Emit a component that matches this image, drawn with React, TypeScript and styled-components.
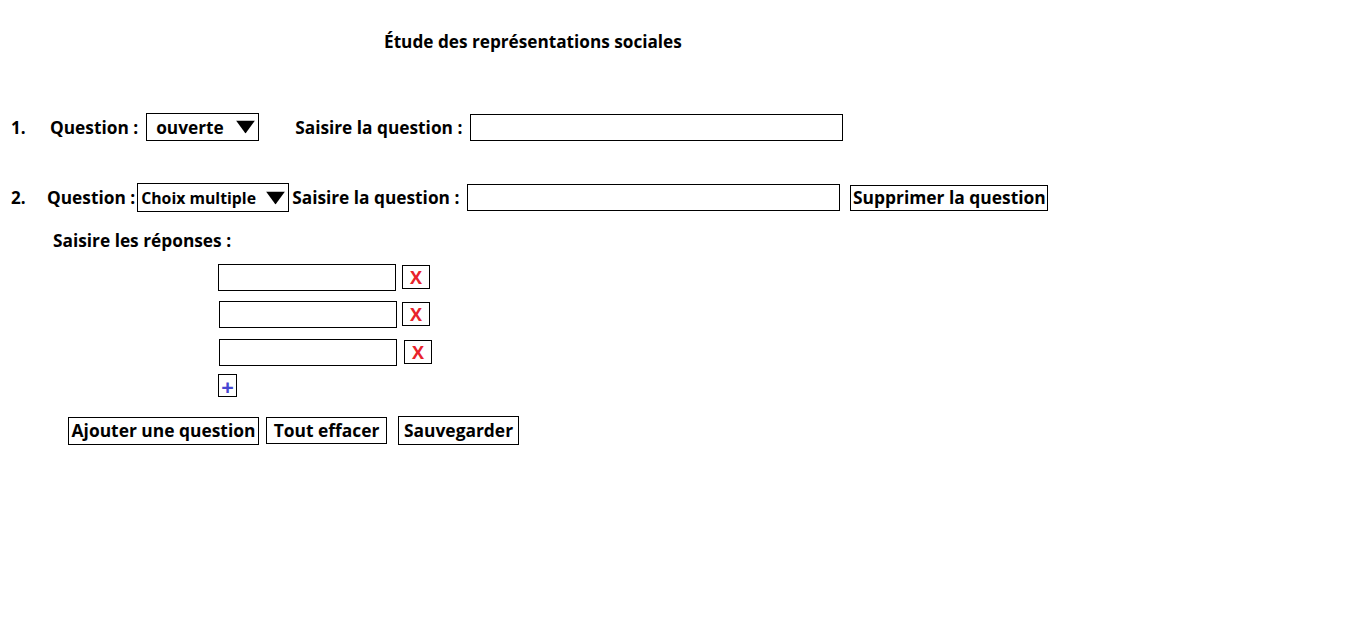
import styled, { createGlobalStyle } from "styled-components";

const GlobalStyle = createGlobalStyle`
  body {
    margin: 0;
    background: #fff;
    font-family: "Open Sans", "Liberation Sans", sans-serif;
    font-weight: 700;
    color: #000;
  }
`;

const Page = styled.div`
  width: 1360px;
  height: 623px;
  padding-top: 30px;
  box-sizing: border-box;
`;

const Title = styled.h1`
  margin: 0 0 0 384px;
  font-size: 17.2px;
  line-height: 24px;
  font-weight: 700;
`;

const Row = styled.div<{ $top: number }>`
  display: flex;
  align-items: center;
  margin-top: ${(p) => p.$top}px;
`;

const Num = styled.span<{ $w: number }>`
  width: ${(p) => p.$w}px;
  padding-left: 11px;
  box-sizing: border-box;
  font-size: 17px;
`;

const Label = styled.span<{ $ml?: number }>`
  font-size: 17.3px;
  margin-left: ${(p) => p.$ml ?? 0}px;
  white-space: nowrap;
`;

const SelectBox = styled.div<{ $w: number; $h: number; $ml: number }>`
  position: relative;
  width: ${(p) => p.$w}px;
  height: ${(p) => p.$h}px;
  margin-left: ${(p) => p.$ml}px;
`;

const Select = styled.select<{ $size: number; $pl: number }>`
  appearance: none;
  width: 100%;
  height: 100%;
  margin: 0;
  padding: 0 0 0 ${(p) => p.$pl}px;
  border: 1px solid #000;
  border-radius: 0;
  background: #fff;
  font-family: inherit;
  font-weight: 700;
  font-size: ${(p) => p.$size}px;
  color: #000;
`;

const Arrow = styled.svg`
  position: absolute;
  right: 4px;
  top: 50%;
  transform: translateY(-50%);
  pointer-events: none;
`;

const TextInput = styled.input<{ $w: number; $ml: number }>`
  width: ${(p) => p.$w}px;
  height: 27px;
  margin: 0 0 0 ${(p) => p.$ml}px;
  padding: 0 4px;
  box-sizing: border-box;
  border: 1px solid #000;
  border-radius: 0;
  outline: none;
  background: #fff;
`;

const Button = styled.button<{ $w: number; $h: number; $ml: number; $mt?: number }>`
  width: ${(p) => p.$w}px;
  height: ${(p) => p.$h}px;
  margin: ${(p) => p.$mt ?? 0}px 0 0 ${(p) => p.$ml}px;
  padding: 0 0 2px;
  border: 1px solid #000;
  border-radius: 0;
  background: #fff;
  font-family: inherit;
  font-weight: 700;
  font-size: 17.4px;
  line-height: 20px;
  color: #000;
  white-space: nowrap;
  cursor: pointer;
`;

const SubTitle = styled.div`
  margin: 17px 0 0 53px;
  font-size: 17.3px;
  line-height: 24px;
`;

const Answers = styled.div`
  display: flex;
  flex-direction: column;
  align-items: flex-start;
  margin-left: 218px;
`;

const AnswerRow = styled.div<{ $mt: number; $shift: number }>`
  display: flex;
  align-items: flex-start;
  margin-top: ${(p) => p.$mt}px;
  padding-left: ${(p) => p.$shift}px;
`;

const IconButton = styled.button<{ $w: number; $h: number; $ml: number; $mt: number; $color: string; $size: number }>`
  width: ${(p) => p.$w}px;
  height: ${(p) => p.$h}px;
  margin: ${(p) => p.$mt}px 0 0 ${(p) => p.$ml}px;
  padding: 0;
  border: 1px solid #000;
  border-radius: 0;
  background: #fff;
  color: ${(p) => p.$color};
  font-family: inherit;
  font-weight: 700;
  font-size: ${(p) => p.$size}px;
  line-height: 1;
  cursor: pointer;
`;

const Footer = styled.div`
  display: flex;
  align-items: flex-start;
  margin: 20px 0 0 68px;
`;

function Triangle() {
  return (
    <Arrow width="19" height="13" viewBox="0 0 19 13">
      <polygon points="0,0 19,0 9.5,13" fill="#000" />
    </Arrow>
  );
}

const answers = [
  { mt: 11, shift: 0, gap: 6 },
  { mt: 10, shift: 1, gap: 5 },
  { mt: 11, shift: 1, gap: 7 },
];

export default function App() {
  return (
    <Page>
      <GlobalStyle />
      <Title>Étude des représentations sociales</Title>

      <Row $top={59}>
        <Num $w={50}>1.</Num>
        <Label>Question :</Label>
        <SelectBox $w={113} $h={28} $ml={8}>
          <Select $size={17.3} $pl={9} defaultValue="ouverte">
            <option value="ouverte">ouverte</option>
            <option value="multiple">Choix multiple</option>
          </Select>
          <Triangle />
        </SelectBox>
        <Label $ml={36}>Saisire la question :</Label>
        <TextInput $w={373} $ml={8} />
      </Row>

      <Row $top={42}>
        <Num $w={47}>2.</Num>
        <Label>Question :</Label>
        <SelectBox $w={152} $h={29} $ml={2}>
          <Select $size={15.8} $pl={3} defaultValue="multiple">
            <option value="ouverte">ouverte</option>
            <option value="multiple">Choix multiple</option>
          </Select>
          <Triangle />
        </SelectBox>
        <Label $ml={3}>Saisire la question :</Label>
        <TextInput $w={373} $ml={8} />
        <Button $w={198} $h={26} $ml={10}>
          Supprimer la question
        </Button>
      </Row>

      <SubTitle>Saisire les réponses :</SubTitle>

      <Answers>
        {answers.map((a, i) => (
          <AnswerRow key={i} $mt={a.mt} $shift={a.shift}>
            <TextInput $w={178} $ml={0} />
            <IconButton $w={28} $h={24} $ml={a.gap} $mt={1} $size={18} $color="#e8232b">
              X
            </IconButton>
          </AnswerRow>
        ))}
        <IconButton $w={19} $h={23} $ml={0} $mt={8} $size={22} $color="#4646d2">
          +
        </IconButton>
      </Answers>

      <Footer>
        <Button $w={191} $h={28} $ml={0}>
          Ajouter une question
        </Button>
        <Button $w={121} $h={27} $ml={7}>
          Tout effacer
        </Button>
        <Button $w={121} $h={29} $ml={11} $mt={-1}>
          Sauvegarder
        </Button>
      </Footer>
    </Page>
  );
}
